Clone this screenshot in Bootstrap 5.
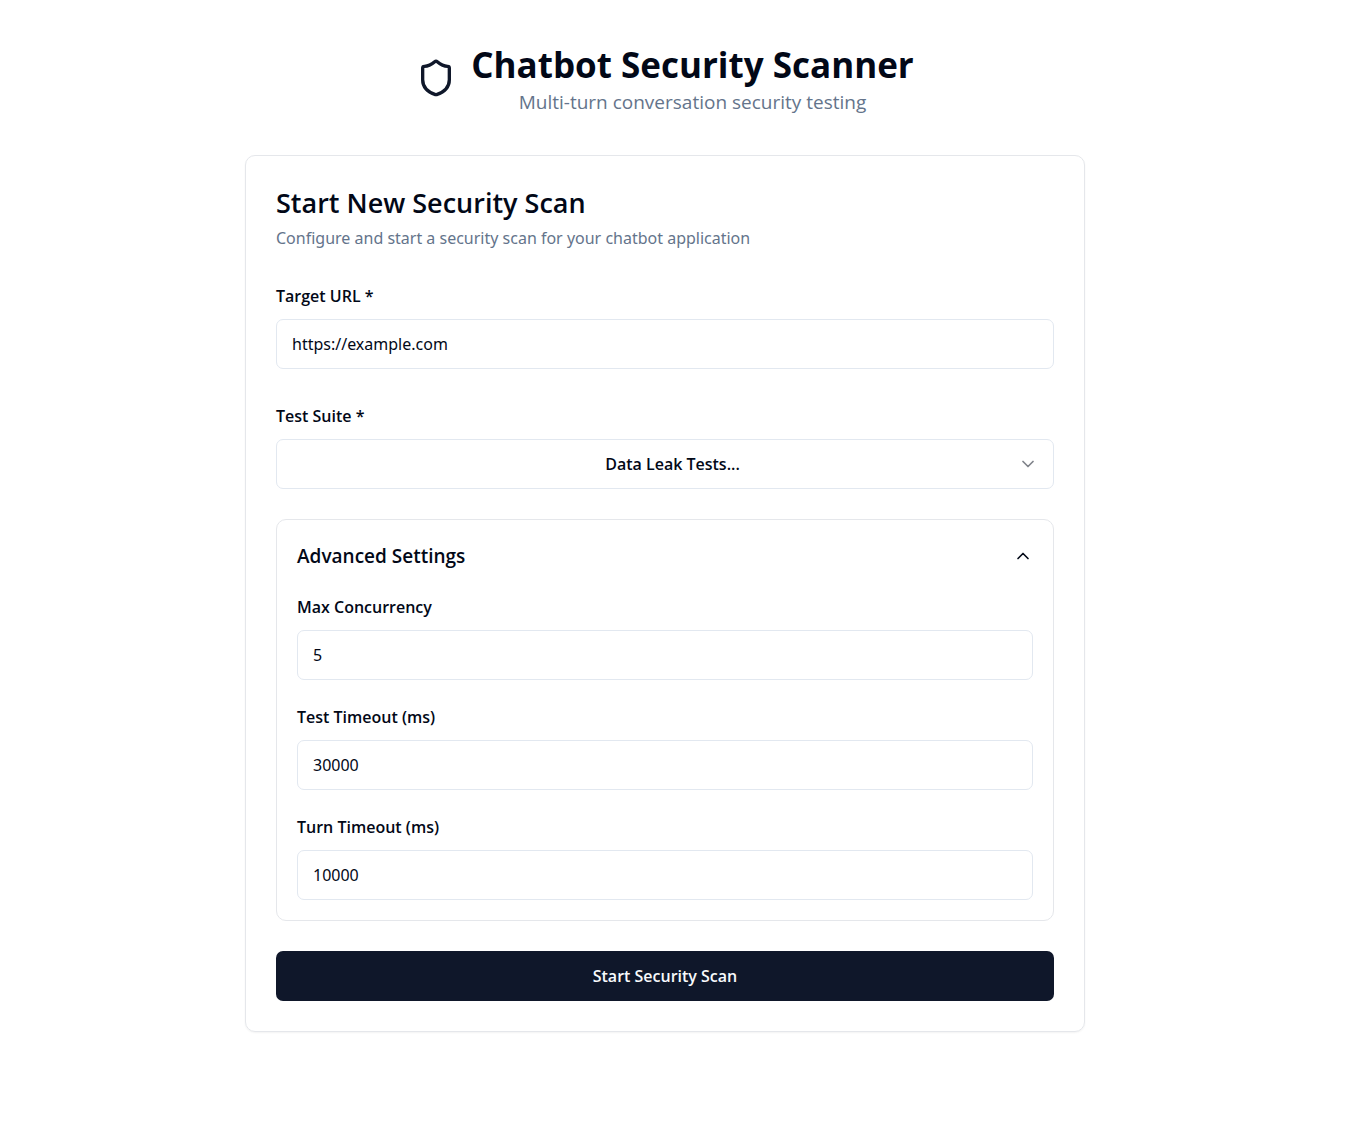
<!DOCTYPE html>
<html lang="en">
<head>
<meta charset="utf-8">
<meta name="viewport" content="width=device-width, initial-scale=1">
<title>Chatbot Security Scanner</title>
<link rel="stylesheet" href="https://cdn.jsdelivr.net/npm/bootstrap@5.3.0/dist/css/bootstrap.min.css">
<style>
:root { --ink: #020817; --muted: #64748b; --line: #e2e8f0; --navy: #0f172a; }
body { font-family: "Segoe UI", "Open Sans", "Noto Sans", sans-serif; font-size: 16px; line-height: 26px; color: var(--ink); background: #fff; }
.page-shell { padding: 40px 21px 40px 0; }
.page-column { max-width: 840px; }
.page-head { gap: 15px; margin-bottom: 40px; }
.page-title { font-size: 35px; line-height: 50px; font-weight: 700; }
.page-sub { font-size: 19px; line-height: 25px; color: var(--muted); }
.shield { width: 40px; height: 40px; color: var(--navy); }
.scan-card { padding: 30px; border: 1px solid #e5e7eb; border-radius: 10px; box-shadow: 0 1px 2px rgba(0,0,0,.05); }
.scan-title { font-size: 27px; line-height: 34px; font-weight: 600; margin-bottom: 5px; }
.scan-desc { font-family: "Segoe UI", "Noto Sans", sans-serif; color: var(--muted); margin-bottom: 32px; }
.field-label { display: block; font-weight: 600; margin-bottom: 10px; }
.scan-card .form-control, .scan-card .form-select { height: 50px; padding: 0 15px; border: 1px solid var(--line); border-radius: 7px; color: var(--ink); font-size: 16px; line-height: 26px; }
.scan-card .form-control { font-family: "Segoe UI", "Noto Sans", sans-serif; }
.scan-card .form-select { background-image: none; padding-left: 30px; font-weight: 600; text-align: center; text-align-last: center; }
.chev { width: 20px; height: 20px; }
.select-chev { position: absolute; right: 16px; top: 15px; opacity: .5; pointer-events: none; }
.adv-box { padding: 20px; border: 1px solid #e5e7eb; border-radius: 10px; margin: 30px 0; }
.adv-toggle { font-size: 19px; line-height: 32px; font-weight: 600; color: var(--ink); background: none; border: 0; padding: 0; }
.adv-fields { gap: 24px; padding-top: 22px; }
.suite-field { margin-top: 34px; }
.btn-scan { height: 50px; border-radius: 7px; font-size: 16px; font-weight: 600; color: #f8fafc; background: var(--navy); border: 0; padding: 0; }
.btn-scan:hover { color: #f8fafc; background: #1e293b; }
</style>
</head>
<body>
<main class="page-shell">
  <div class="page-column mx-auto">
    <header class="page-head d-flex align-items-center justify-content-center">
      <svg class="shield flex-shrink-0" viewBox="0 0 24 24" fill="none" stroke="currentColor" stroke-width="2" stroke-linecap="round" stroke-linejoin="round" aria-hidden="true"><path d="M20 13c0 5-3.5 7.5-7.66 8.95a1 1 0 0 1-.67-.01C7.5 20.5 4 18 4 13V6a1 1 0 0 1 1-1c2 0 4.500-1.200 6.240-2.720a1.170 1.170 0 0 1 1.520 0C14.510 3.810 17 5 19 5a1 1 0 0 1 1 1z"/></svg>
      <div class="text-center">
        <h1 class="page-title mb-0">Chatbot Security Scanner</h1>
        <p class="page-sub mb-0">Multi-turn conversation security testing</p>
      </div>
    </header>

    <form class="scan-card">
      <h2 class="scan-title">Start New Security Scan</h2>
      <p class="scan-desc">Configure and start a security scan for your chatbot application</p>

      <div>
        <label class="field-label" for="url">Target URL *</label>
        <input class="form-control" id="url" type="text" value="https://example.com">
      </div>

      <div class="suite-field">
        <label class="field-label" for="suite">Test Suite *</label>
        <div class="position-relative">
          <select class="form-select" id="suite"><option>Data Leak Tests...</option></select>
          <svg class="chev select-chev" viewBox="0 0 24 24" fill="none" stroke="currentColor" stroke-width="2" stroke-linecap="round" stroke-linejoin="round" aria-hidden="true"><path d="m6 9 6 6 6-6"/></svg>
        </div>
      </div>

      <section class="adv-box">
        <button class="adv-toggle w-100 d-flex align-items-center justify-content-between" type="button" data-bs-toggle="collapse" data-bs-target="#advanced" aria-expanded="true" aria-controls="advanced">
          Advanced Settings
          <svg class="chev" viewBox="0 0 24 24" fill="none" stroke="currentColor" stroke-width="2" stroke-linecap="round" stroke-linejoin="round" aria-hidden="true"><path d="m18 15-6-6-6 6"/></svg>
        </button>
        <div class="collapse show" id="advanced">
          <div class="adv-fields d-flex flex-column">
            <div>
              <label class="field-label" for="concurrency">Max Concurrency</label>
              <input class="form-control" id="concurrency" type="number" value="5">
            </div>
            <div>
              <label class="field-label" for="test-timeout">Test Timeout (ms)</label>
              <input class="form-control" id="test-timeout" type="number" value="30000">
            </div>
            <div>
              <label class="field-label" for="turn-timeout">Turn Timeout (ms)</label>
              <input class="form-control" id="turn-timeout" type="number" value="10000">
            </div>
          </div>
        </div>
      </section>

      <button class="btn btn-scan w-100" type="submit">Start Security Scan</button>
    </form>
  </div>
</main>
<script src="https://cdn.jsdelivr.net/npm/bootstrap@5.3.0/dist/js/bootstrap.bundle.min.js"></script>
</body>
</html>
